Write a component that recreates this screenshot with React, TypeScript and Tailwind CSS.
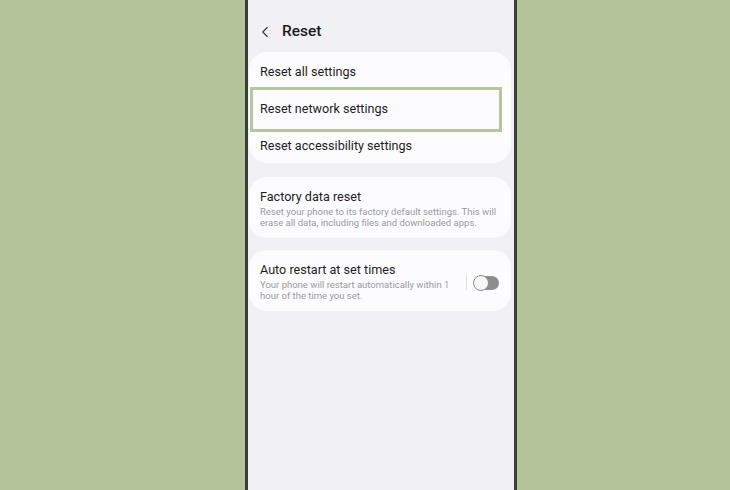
import { ChevronLeft } from 'lucide-react';

const font = { fontFamily: 'Roboto, "Noto Sans", Arial, sans-serif' };

function Row({ label }: { label: string }) {
  return (
    <div className="h-[37px] flex items-center pt-[4px] pl-[11px] text-[12.6px] text-[#1c1c1c]">{label}</div>
  );
}

export default function App() {
  return (
    <div className="w-[730px] h-[490px] bg-[#b3c49b] flex overflow-hidden" style={font}>
      <div className="ml-[245px] w-[272px] h-full border-x-[3px] border-[#3b3f3b] bg-[#f0f0f5] flex flex-col">
        {/* Header */}
        <div className="h-[52px] flex items-center pl-[8px] pt-[12px]">
          <ChevronLeft className="w-[18px] h-[18px] text-[#333]" strokeWidth={1.5} />
          <span className="ml-[8px] text-[15.5px] font-medium text-[#1c1c1c]">Reset</span>
        </div>

        {/* Card 1 */}
        <div className="relative ml-[1px] mr-[3px] bg-[#fcfcfe] rounded-[18px]">
          <Row label="Reset all settings" />
          <Row label="Reset network settings" />
          <Row label="Reset accessibility settings" />
          <div className="absolute left-[1px] top-[35px] w-[252px] h-[45px] border-[3px] border-[#b5c59d]" />
        </div>

        {/* Card 2 */}
        <div className="mt-[14px] ml-[1px] mr-[3px] h-[61px] bg-[#fcfcfe] rounded-[18px] pl-[11px] pt-[12px]">
          <div className="text-[12.6px] leading-[16px] text-[#1c1c1c]">Factory data reset</div>
          <div className="mt-[1px] text-[9.5px] leading-[11px] text-[#9a9a9e] pr-[8px]">
            Reset your phone to its factory default settings. This will erase all data, including files and downloaded apps.
          </div>
        </div>

        {/* Card 3 */}
        <div className="mt-[12px] ml-[1px] mr-[3px] h-[61px] bg-[#fcfcfe] rounded-[18px] pl-[11px] pt-[12px] flex">
          <div className="flex-1">
            <div className="text-[12.6px] leading-[16px] text-[#1c1c1c]">Auto restart at set times</div>
            <div className="mt-[1px] text-[9.5px] leading-[11px] text-[#9a9a9e] w-[196px]">
              Your phone will restart automatically within 1 hour of the time you set.
            </div>
          </div>
          <div className="flex items-start pt-[13px] pr-[12px]">
            <div className="w-px h-[15px] bg-[#e2e2e6] mr-[7px]" />
            <div className="relative w-[25px] h-[14px] mt-[1px] rounded-full bg-[#8e8e90]">
              <div className="absolute -left-[1px] -top-[1px] w-[16px] h-[16px] rounded-full bg-[#f7f7f7] border-[1.5px] border-[#8e8e90]" />
            </div>
          </div>
        </div>
      </div>
    </div>
  );
}
